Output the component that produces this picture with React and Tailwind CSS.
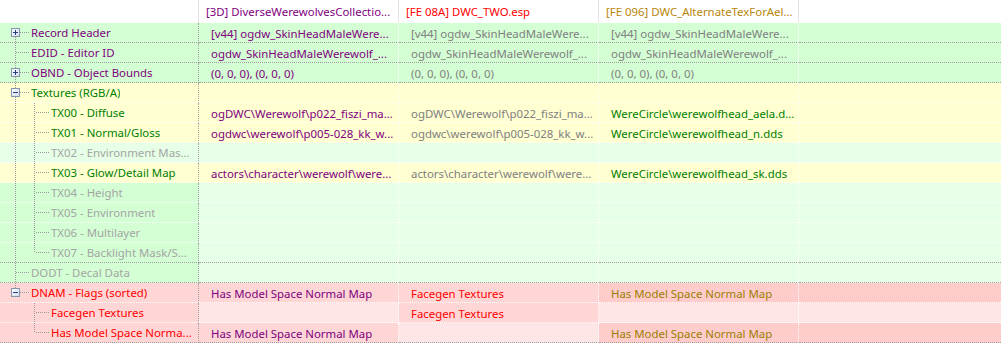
import React from 'react'

const P = 'text-[#800080]'
const GR = 'text-[#808080]'
const FD = 'text-[#a4a4a4]'
const GN = 'text-[#008000]'
const RD = 'text-[#ff0000]'
const OL = 'text-[#9a7e00]'

const G = 'bg-[#d4ffd4]'
const PG = 'bg-[#e6ffe6]'
const Y = 'bg-[#ffffd2]'
const PK = 'bg-[#ffd6d6]'
const DK = 'bg-[#ffcccc]'
const LP = 'bg-[#ffe6e6]'

const rows = [
  { label: 'Record Header', lc: P, level: 1, box: 'plus', first: true, bg: [G, G, G, G, G],
    vals: [['[v44] ogdw_SkinHeadMaleWere...', P], ['[v44] ogdw_SkinHeadMaleWere...', GR], ['[v44] ogdw_SkinHeadMaleWere...', GR]] },
  { label: 'EDID - Editor ID', lc: P, level: 1, bg: [G, G, G, G, G],
    vals: [['ogdw_SkinHeadMaleWerewolf_...', P], ['ogdw_SkinHeadMaleWerewolf_...', GR], ['ogdw_SkinHeadMaleWerewolf_...', GR]] },
  { label: 'OBND - Object Bounds', lc: P, level: 1, box: 'plus', bg: [G, G, G, G, G],
    vals: [['(0, 0, 0), (0, 0, 0)', P], ['(0, 0, 0), (0, 0, 0)', GR], ['(0, 0, 0), (0, 0, 0)', GR]] },
  { label: 'Textures (RGB/A)', lc: GN, level: 1, box: 'minus', bg: [Y, Y, Y, Y, Y], vals: [] },
  { label: 'TX00 - Diffuse', lc: GN, level: 2, cont: true, bg: [Y, Y, Y, Y, Y],
    vals: [['ogDWC\\Werewolf\\p022_fiszi_ma...', P], ['ogDWC\\Werewolf\\p022_fiszi_ma...', GR], ['WereCircle\\werewolfhead_aela.d...', GN]] },
  { label: 'TX01 - Normal/Gloss', lc: GN, level: 2, cont: true, bg: [Y, Y, Y, Y, Y],
    vals: [['ogdwc\\werewolf\\p005-028_kk_w...', P], ['ogdwc\\werewolf\\p005-028_kk_w...', GR], ['WereCircle\\werewolfhead_n.dds', GN]] },
  { label: 'TX02 - Environment Mas...', lc: FD, level: 2, cont: true, bg: [PG, PG, PG, PG, PG], vals: [] },
  { label: 'TX03 - Glow/Detail Map', lc: GN, level: 2, cont: true, bg: [Y, Y, Y, Y, Y],
    vals: [['actors\\character\\werewolf\\were...', P], ['actors\\character\\werewolf\\were...', GR], ['WereCircle\\werewolfhead_sk.dds', GN]] },
  { label: 'TX04 - Height', lc: FD, level: 2, cont: true, bg: [G, PG, PG, PG, PG], vals: [] },
  { label: 'TX05 - Environment', lc: FD, level: 2, cont: true, bg: [G, PG, PG, PG, PG], vals: [] },
  { label: 'TX06 - Multilayer', lc: FD, level: 2, cont: true, bg: [G, PG, PG, PG, PG], vals: [] },
  { label: 'TX07 - Backlight Mask/S...', lc: FD, level: 2, cont: true, last: true, bg: [G, PG, PG, PG, PG], vals: [] },
  { label: 'DODT - Decal Data', lc: FD, level: 1, bg: [G, PG, PG, PG, PG], vals: [] },
  { label: 'DNAM - Flags (sorted)', lc: RD, level: 1, box: 'minus', lastTop: true, bg: [PK, PK, PK, DK, DK],
    vals: [['Has Model Space Normal Map', P], ['Facegen Textures', RD], ['Has Model Space Normal Map', OL]] },
  { label: 'Facegen Textures', lc: RD, level: 2, cont: false, bg: [PK, LP, PK, LP, LP],
    vals: [['', P], ['Facegen Textures', RD], ['', OL]] },
  { label: 'Has Model Space Norma...', lc: RD, level: 2, cont: false, last: true, bg: [PK, PK, LP, DK, DK],
    vals: [['Has Model Space Normal Map', P], ['', RD], ['Has Model Space Normal Map', OL]] },
]

function Box({ kind }) {
  return (
    <g>
      <defs>
        <linearGradient id={`bx-${kind}`} x1="0" y1="0" x2="1" y2="1">
          <stop offset="0" stopColor="#ffffff" />
          <stop offset="1" stopColor="#d3dbe8" />
        </linearGradient>
      </defs>
      <rect x="11.5" y="5.5" width="8" height="8" fill={`url(#bx-${kind})`} stroke="#8696ae" />
      <line x1="13" y1="9.5" x2="18" y2="9.5" stroke="#23418c" />
      {kind === 'plus' && <line x1="15.5" y1="7" x2="15.5" y2="12" stroke="#23418c" />}
    </g>
  )
}

function Tree({ row }) {
  const w = row.level === 1 ? 31 : 51
  const dash = { stroke: '#9a9a9a', strokeDasharray: '1 1' }
  return (
    <svg width={w} height="19" className="shrink-0">
      {row.level === 1 && (
        <>
          <line x1="15.5" y1={row.first ? 10 : 0} x2="15.5" y2={row.lastTop ? 10 : 19} {...dash} />
          <line x1="20" y1="9.5" x2="29" y2="9.5" {...dash} />
          {!row.box && <line x1="16" y1="9.5" x2="20" y2="9.5" {...dash} />}
          {row.box && <Box kind={row.box} />}
        </>
      )}
      {row.level === 2 && (
        <>
          {row.cont && <line x1="15.5" y1="0" x2="15.5" y2="19" {...dash} />}
          <line x1="34.5" y1="0" x2="34.5" y2={row.last ? 10 : 19} {...dash} />
          <line x1="36" y1="9.5" x2="49" y2="9.5" {...dash} />
        </>
      )}
    </svg>
  )
}

function Row({ row, sepGray }) {
  const sep = sepGray ? 'border-[#a0a0a0]' : 'border-white'
  return (
    <div className="flex h-5">
      <div className={`flex items-center w-[199px] shrink-0 border-b border-r border-dotted border-r-[#a0a0a0] ${sepGray ? 'border-b-[#a0a0a0]' : 'border-b-white'} ${row.bg[0]}`}>
        <Tree row={row} />
        <span className={`whitespace-nowrap overflow-hidden pt-px ${row.lc}`}>{row.label}</span>
      </div>
      {[0, 1, 2].map(i => (
        <div
          key={i}
          className={`w-[200px] shrink-0 pl-3 pt-px leading-[19px] whitespace-nowrap overflow-hidden border-b border-r border-dotted border-r-white ${sepGray ? 'border-b-[#a0a0a0]' : 'border-b-white'} ${row.bg[i + 1]} ${row.vals[i] ? row.vals[i][1] : ''}`}
        >
          {row.vals[i] ? row.vals[i][0] : ''}
        </div>
      ))}
      <div className={`flex-1 border-b border-dotted ${sep} ${row.bg[4]}`} />
    </div>
  )
}

export default function App() {
  return (
    <div className="w-[1001px] h-[345px] overflow-hidden bg-white text-[11.4px] font-['Segoe_UI','Noto_Sans',sans-serif] select-none">
      <div className="flex h-[23px] leading-[23px] bg-white">
        <div className="w-[199px] shrink-0 border-r border-[#e3e3e3]" />
        <div className="w-[200px] shrink-0 pl-[7px] border-r border-[#e3e3e3] text-[#800080] whitespace-nowrap overflow-hidden">[3D] DiverseWerewolvesCollectio...</div>
        <div className="w-[200px] shrink-0 pl-[7px] border-r border-[#e3e3e3] text-[#ff0000] whitespace-nowrap overflow-hidden">[FE 08A] DWC_TWO.esp</div>
        <div className="w-[200px] shrink-0 pl-[7px] border-r border-[#e3e3e3] text-[#b8860b] whitespace-nowrap overflow-hidden">[FE 096] DWC_AlternateTexForAel...</div>
        <div className="flex-1" />
      </div>
      {rows.map((row, i) => {
        const next = rows[i + 1]
        const sepGray = !next || next.level === 1
        return <Row key={i} row={row} sepGray={sepGray} />
      })}
    </div>
  )
}
